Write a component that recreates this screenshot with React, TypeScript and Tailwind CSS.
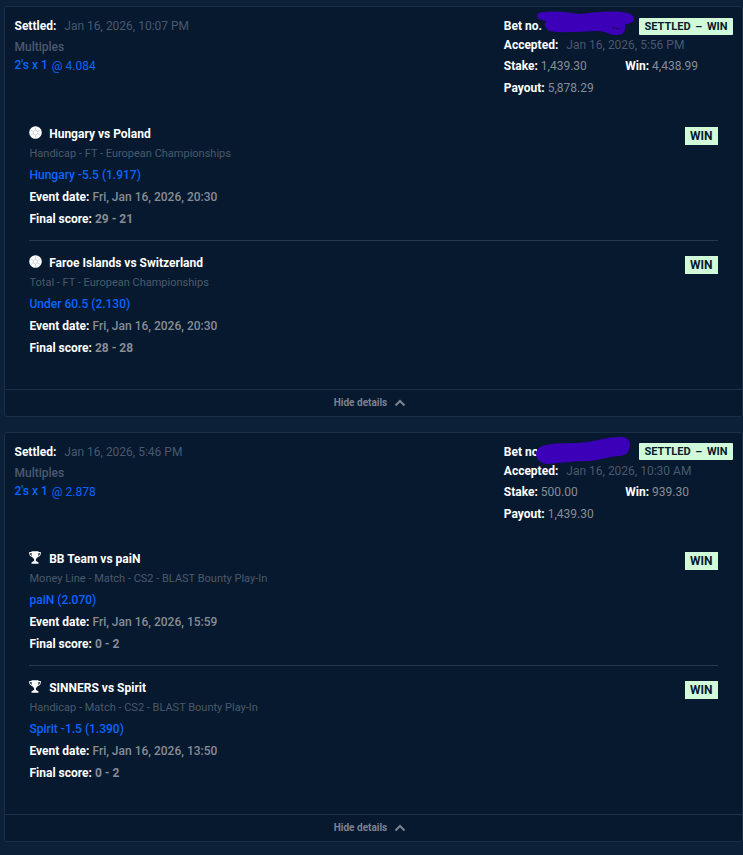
import React from 'react';

interface BetEvent {
  name: string;
  league: string;
  pick: string;
  date: string;
  score: string;
}

interface Bet {
  settled: string;
  odds: string;
  betNo: string;
  accepted: string;
  stake: string;
  win: string;
  payout: string;
  sport: 'handball' | 'esports';
  events: BetEvent[];
}

const bets: Bet[] = [
  {
    settled: 'Jan 16, 2026, 10:07 PM',
    odds: '4.084',
    betNo: 'Bet no.',
    accepted: 'Jan 16, 2026, 5:56 PM',
    stake: '1,439.30',
    win: '4,438.99',
    payout: '5,878.29',
    sport: 'handball',
    events: [
      {
        name: 'Hungary vs Poland',
        league: 'Handicap - FT - European Championships',
        pick: 'Hungary -5.5 (1.917)',
        date: 'Fri, Jan 16, 2026, 20:30',
        score: '29 - 21',
      },
      {
        name: 'Faroe Islands vs Switzerland',
        league: 'Total - FT - European Championships',
        pick: 'Under 60.5 (2.130)',
        date: 'Fri, Jan 16, 2026, 20:30',
        score: '28 - 28',
      },
    ],
  },
  {
    settled: 'Jan 16, 2026, 5:46 PM',
    odds: '2.878',
    betNo: 'Bet no',
    accepted: 'Jan 16, 2026, 10:30 AM',
    stake: '500.00',
    win: '939.30',
    payout: '1,439.30',
    sport: 'esports',
    events: [
      {
        name: 'BB Team vs paiN',
        league: 'Money Line - Match - CS2 - BLAST Bounty Play-In',
        pick: 'paiN (2.070)',
        date: 'Fri, Jan 16, 2026, 15:59',
        score: '0 - 2',
      },
      {
        name: 'SINNERS vs Spirit',
        league: 'Handicap - Match - CS2 - BLAST Bounty Play-In',
        pick: 'Spirit -1.5 (1.390)',
        date: 'Fri, Jan 16, 2026, 13:50',
        score: '0 - 2',
      },
    ],
  },
];

const HandballIcon = () => (
  <svg viewBox="0 0 13 13" className="h-[13px] w-[13px]">
    <circle cx="6.5" cy="6.5" r="6.3" fill="#fff" />
    <path
      d="M6.5 4.2 8.7 5.6v2.2L6.5 9 4.3 7.8V5.6zM6.5 4.2V1.8M8.7 5.6l2.2-1.3M8.7 7.8l2.1 1.4M6.5 9v2.4M4.3 7.8 2.2 9.2M4.3 5.6 2.1 4.3"
      fill="none"
      stroke="#a9afb8"
      strokeWidth="0.5"
    />
  </svg>
);

const TrophyIcon = () => (
  <svg viewBox="0 0 12 13" className="h-[13px] w-[12px]">
    <path
      d="M2.5 0.3h7v.8h2.3v1.500c0 1.900-1.200 3.100-3 3.500-.4.800-1 1.500-1.900 1.800v2.400h.8l1.800 1.200v1.200H2.500v-1.200l1.800-1.200h.8V7.900c-.9-.3-1.500-1-1.900-1.800-1.800-.4-3-1.600-3-3.500V1.100h2.300zM2.500 2H1.200v.7c0 1 .5 1.700 1.500 2.200zM9.500 2l-.2 2.900c1-.5 1.500-1.200 1.500-2.200V2z"
      fill="#fff"
      fillRule="evenodd"
    />
  </svg>
);

const DottedScribble = () => (
  <svg viewBox="0 0 100 26" className="absolute -top-[6px] left-[32px] h-[26px] w-[100px]">
    <path
      d="M8 2C20 .5 32 2.500 45 4C58 2 72 1 86 2C94 3 98 5 98 9C98 12 94 14 89 14C90 20 88 26 80 25C73 25 70 21 62 21C48 21 35 23 23 22C16 22 10 21 10 17C8 15 9 14 10 11C4 10 1 8 1 6C1 3 4 2 8 2Z"
      fill="#3c00b8"
    />
    <path d="M76 18l3-.5 1 1 3 .5" stroke="#170b3c" fill="none" />
  </svg>
);

const SmoothScribble = () => (
  <svg viewBox="0 0 96 28" className="absolute -top-[5.5px] left-[31.5px] h-[28px] w-[96px]">
    <path
      d="M11 9C25 6 38 8 52 6C65 4 74 1 84 1C91 0 95 4 95 9C95 15 92 19 85 20C75 20 66 24 54 25C39 25 25 27 13 28C6 28 1 23 1 18C1 13 5 10 11 9Z"
      fill="#3c00b8"
    />
  </svg>
);

const EventRow: React.FC<{ event: BetEvent; sport: Bet['sport'] }> = ({ event, sport }) => {
  return (
    <div className="flex items-start justify-between">
      <div className="pl-[0.5px]">
        <div className="flex h-[22px] items-center">
          <span className="-mt-[3px] -ml-[0.7px] w-[20.4px] shrink-0">
            {sport === 'handball' ? <HandballIcon /> : <TrophyIcon />}
          </span>
          <span className="font-bold text-white">{event.name}</span>
        </div>
        <div className="h-[19px] text-[11px] leading-[18px] text-[#4a596c]">{event.league}</div>
        <div className="font-medium text-[#0865ff]">{event.pick}</div>
        <div className="font-medium text-[#868c96]">
          <span className="font-bold text-white">Event date:</span> {event.date}
        </div>
        <div className="font-bold text-[#868c96]">
          <span className="text-white">Final score:</span> {event.score}
        </div>
      </div>
      <span className="mt-1 h-[18px] bg-[#d0fad8] px-[5.5px] font-bold leading-[18px] text-[#071a2f]">WIN</span>
    </div>
  );
};

const BetCard: React.FC<{ bet: Bet }> = ({ bet }) => {
  return (
    <section className="flex h-[410.5px] flex-col rounded-[3px] border border-[#1b2f48] bg-[#07192e]">
      <header className="flex h-[115.5px] shrink-0 justify-between">
        <div className="pt-2 pl-[9.5px]">
          <div className="text-[#48586f]">
            <span className="mr-2 font-bold text-white">Settled:</span>
            {bet.settled}
          </div>
          <div className="h-[17px] leading-5 font-medium text-[#4a5a70]">Multiples</div>
          <div className="text-[#0865ff]">
            <span className="font-medium">2's x 1</span>
            <span className="relative top-px ml-1">@ {bet.odds}</span>
          </div>
        </div>
        <div className="w-[238.2px] pt-[9px] text-[#868c96]">
          <div className="relative flex h-5 items-center justify-between">
            <span className="font-bold text-white">{bet.betNo}</span>
            {bet.sport === 'handball' ? <DottedScribble /> : <SmoothScribble />}
            <span className="mt-[0.6px] mr-[9px] h-[17px] w-[94px] rounded-[1px] bg-[#d0fad8] text-center text-[11px] leading-[17px] font-bold whitespace-nowrap text-[#071a2f] [word-spacing:2px]">
              SETTLED – WIN
            </span>
          </div>
          <div className="h-[19px] leading-[18px] text-[#48586f]">
            <span className="mr-2 font-bold text-white">Accepted:</span>
            {bet.accepted}
          </div>
          <div className="flex">
            <div className="w-[121.5px]">
              <span className="font-bold text-white">Stake:</span> {bet.stake}
            </div>
            <div>
              <span className="font-bold text-white">Win:</span> {bet.win}
            </div>
          </div>
          <div>
            <span className="font-bold text-white">Payout:</span> {bet.payout}
          </div>
        </div>
      </header>
      <div className="grow pr-6 pl-6">
        <EventRow event={bet.events[0]} sport={bet.sport} />
        <hr className="mt-[10px] mb-[11px] border-[#263950]" />
        <EventRow event={bet.events[1]} sport={bet.sport} />
      </div>
      <button className="flex h-[27px] w-full items-center justify-center gap-[7px] border-t border-[#1b2f48] pr-[7px] text-[10px] font-bold text-[#7c838e]">
        Hide details
        <svg viewBox="0 0 12 8" className="h-2 w-3">
          <path d="M1.500 6.500 6 2l4.500 4.500" fill="none" stroke="#7c838e" strokeWidth="2" />
        </svg>
      </button>
    </section>
  );
};

export default function App() {
  return (
    <main className="flex h-[855px] flex-col gap-[15px] overflow-hidden bg-[#0c2038] pt-[6.2px] pl-1 font-['Roboto',sans-serif] text-[12px] leading-[22px]">
      {bets.map((bet) => (
        <BetCard key={bet.settled} bet={bet} />
      ))}
    </main>
  );
}
